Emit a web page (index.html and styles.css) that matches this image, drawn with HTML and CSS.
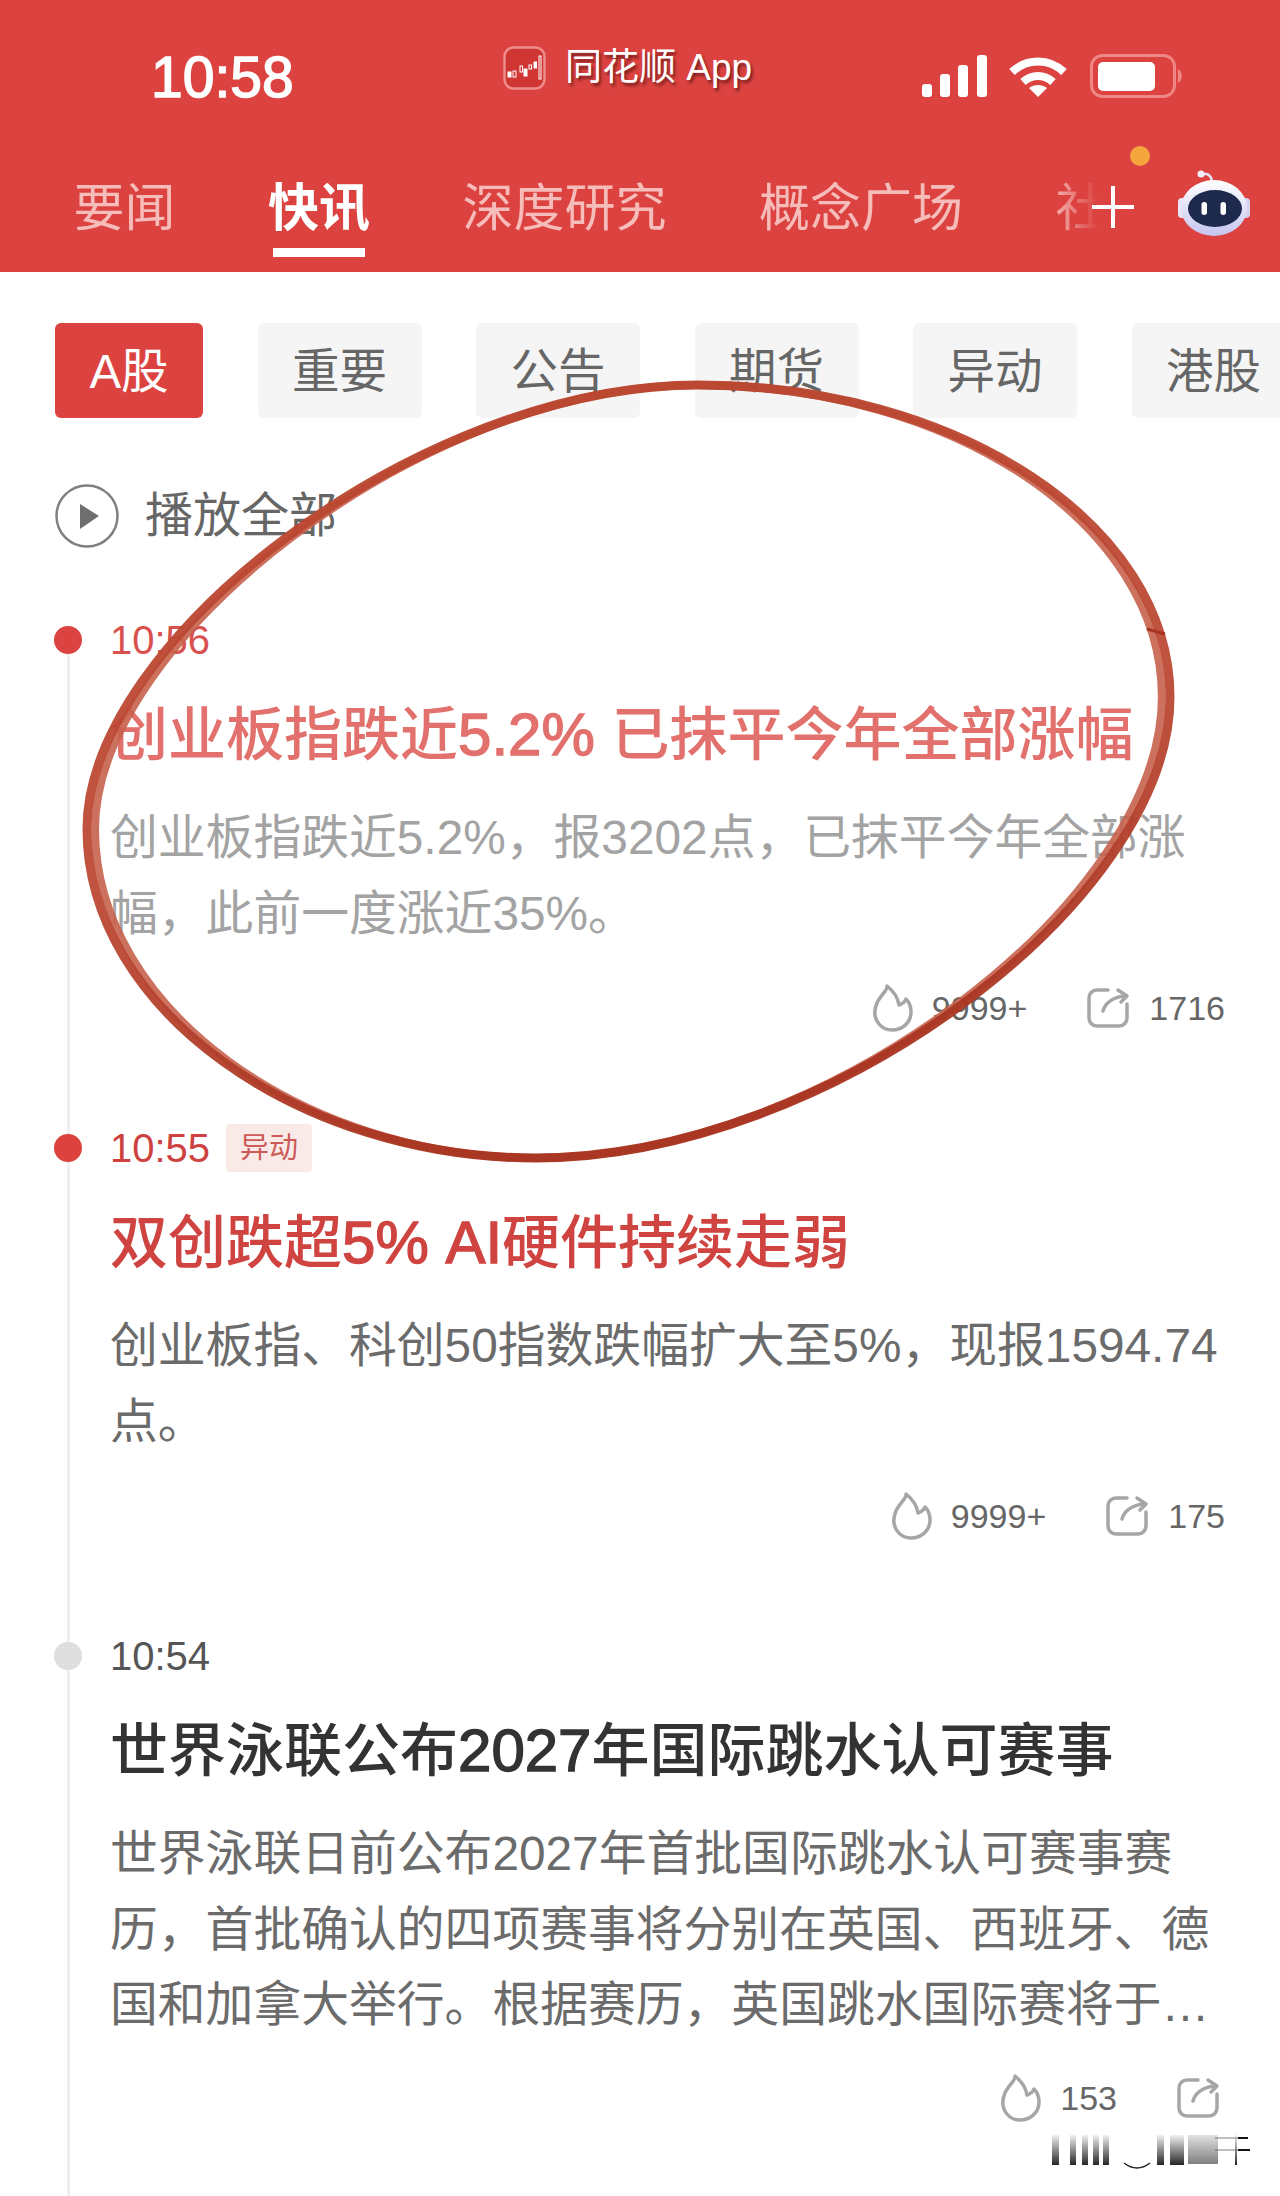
FILE: index.html
```html
<!DOCTYPE html>
<html lang="zh-CN">
<head>
<meta charset="utf-8">
<title>同花顺 快讯</title>
<link rel="stylesheet" href="styles.css">
</head>
<body>
<div class="page">
  <header class="header">
    <div class="status">
      <div class="clock">10:58</div>
      <div class="app-name">
        <svg class="app-icon" viewBox="0 0 43 44">
          <rect x="1.5" y="1.5" width="40" height="41" rx="9" fill="#cf3533" stroke="#ee8d8b" stroke-width="2.5"/>
          <g fill="#fff" stroke="#fff" stroke-width="1">
            <rect x="5" y="26" width="3" height="5"/>
            <rect x="10" y="25" width="3" height="6" fill="none"/>
            <rect x="17" y="20" width="2.5" height="6" fill="none"/>
            <rect x="21" y="23" width="3" height="7"/>
            <rect x="26" y="19" width="2.5" height="4" fill="none"/>
            <rect x="31" y="16" width="2.5" height="6"/>
            <rect x="36" y="10" width="2" height="23" fill="none"/>
          </g>
        </svg>
        <span class="app-label">同花顺 App</span>
      </div>
      <div class="sys">
        <svg class="signal" viewBox="0 0 65 42" fill="#fff">
          <rect x="0" y="29" width="10" height="13" rx="3"/>
          <rect x="18" y="19" width="10" height="23" rx="3"/>
          <rect x="36" y="10" width="10" height="32" rx="3"/>
          <rect x="55" y="0" width="10" height="42" rx="3"/>
        </svg>
        <svg class="wifi" viewBox="0 0 58 42" fill="none" stroke="#fff">
          <path d="M3 17 C18 3 40 3 55 17" stroke-width="8"/>
          <path d="M14 27 C23 19 35 19 44 27" stroke-width="8"/>
          <path d="M29 42 L20 33 C25 29 33 29 38 33 Z" fill="#fff" stroke="none"/>
        </svg>
        <svg class="battery" viewBox="0 0 94 44" fill="none">
          <rect x="1.5" y="1.5" width="83" height="41" rx="11" stroke="#ee8785" stroke-width="3"/>
          <rect x="8" y="8" width="57" height="29" rx="5" fill="#fff"/>
          <path d="M88 15 C93 18 93 26 88 29 Z" fill="#ee8785"/>
        </svg>
      </div>
    </div>
    <nav class="tabs">
      <a class="tab">要闻</a>
      <a class="tab tab-active">快讯</a>
      <a class="tab">深度研究</a>
      <a class="tab">概念广场</a>
      <a class="tab">社区</a>
    </nav>
    <div class="tools">
      <span class="plus"></span>
      <span class="notify"></span>
      <svg class="robot" viewBox="0 0 72 68">
        <defs>
          <linearGradient id="robotHead" x1="0" y1="0" x2="0" y2="1">
            <stop offset="0" stop-color="#ffffff"/>
            <stop offset="1" stop-color="#c5c5f0"/>
          </linearGradient>
        </defs>
        <path d="M24 5 C30 2 33 6 34 11" fill="none" stroke="#e6e3f5" stroke-width="2.5"/>
        <circle cx="23" cy="4" r="3.5" fill="#f1eff9"/>
        <rect x="0" y="28" width="8" height="20" rx="4" fill="#e8e6f7"/>
        <rect x="64" y="28" width="8" height="20" rx="4" fill="#d6d3ef"/>
        <ellipse cx="36" cy="38" rx="33" ry="28" fill="url(#robotHead)"/>
        <ellipse cx="37" cy="38.5" rx="27" ry="18.5" fill="#1d2a4e"/>
        <rect x="23.5" y="32" width="5.5" height="13" rx="2.7" fill="#fff"/>
        <rect x="42.5" y="32" width="5.5" height="13" rx="2.7" fill="#fff"/>
      </svg>
    </div>
  </header>

  <div class="chips">
    <a class="chip chip-active">A股</a>
    <a class="chip">重要</a>
    <a class="chip">公告</a>
    <a class="chip">期货</a>
    <a class="chip">异动</a>
    <a class="chip">港股</a>
  </div>

  <div class="play-all">
    <svg class="play-icon" viewBox="0 0 64 64">
      <circle cx="32" cy="32" r="30.5" fill="none" stroke="#808080" stroke-width="2.5"/>
      <path d="M25 20 L44 32 L25 45 Z" fill="#6f6f6f"/>
    </svg>
    <span class="play-label">播放全部</span>
  </div>

  <section class="feed">
    <article class="item item-read">
      <div class="rail"><span class="dot dot-red"></span><span class="line"></span></div>
      <div class="content">
        <div class="meta"><time class="time time-red">10:56</time></div>
        <h2 class="title">创业板指跌近<span class="latin">5.2% </span>已抹平今年全部涨幅</h2>
        <p class="body">创业板指跌近5.2%，报3202点，已抹平今年全部涨幅，此前一度涨近35%。</p>
        <div class="stats">
          <span class="stat">
            <svg class="fire" viewBox="0 0 40 48"><path d="M14 2 C15 6 7 12 4 19 C1 26 1 34 6 40 C10 45 15 46 19 46 C29 46 38 39 38 28 C38 23 36 18 33 15 C32 18 29 20 26 21 C25 13 19 6 14 2 Z"/></svg>
            <span class="count">9999+</span>
          </span>
          <span class="stat">
            <svg class="share" viewBox="0 0 44 42"><path d="M22 3 H11 A8 8 0 0 0 3 11 V31 A8 8 0 0 0 11 39 H33 A8 8 0 0 0 41 31 V17"/><path d="M17 24 C19 16 27 10 39 9"/><path d="M32 3 L41 9 L35 15"/></svg>
            <span class="count">1716</span>
          </span>
        </div>
      </div>
    </article>

    <article class="item item-hot">
      <div class="rail"><span class="dot dot-red"></span><span class="line"></span></div>
      <div class="content">
        <div class="meta"><time class="time time-red">10:55</time><span class="badge">异动</span></div>
        <h2 class="title">双创跌超<span class="latin">5% AI</span>硬件持续走弱</h2>
        <p class="body">创业板指、科创50指数跌幅扩大至5%，现报1594.74点。</p>
        <div class="stats">
          <span class="stat">
            <svg class="fire" viewBox="0 0 40 48"><path d="M14 2 C15 6 7 12 4 19 C1 26 1 34 6 40 C10 45 15 46 19 46 C29 46 38 39 38 28 C38 23 36 18 33 15 C32 18 29 20 26 21 C25 13 19 6 14 2 Z"/></svg>
            <span class="count">9999+</span>
          </span>
          <span class="stat">
            <svg class="share" viewBox="0 0 44 42"><path d="M22 3 H11 A8 8 0 0 0 3 11 V31 A8 8 0 0 0 11 39 H33 A8 8 0 0 0 41 31 V17"/><path d="M17 24 C19 16 27 10 39 9"/><path d="M32 3 L41 9 L35 15"/></svg>
            <span class="count">175</span>
          </span>
        </div>
      </div>
    </article>

    <article class="item">
      <div class="rail"><span class="dot"></span><span class="line"></span></div>
      <div class="content">
        <div class="meta"><time class="time">10:54</time></div>
        <h2 class="title">世界泳联公布<span class="latin">2027</span>年国际跳水认可赛事</h2>
        <p class="body body-clamp">世界泳联日前公布2027年首批国际跳水认可赛事赛历，首批确认的四项赛事将分别在英国、西班牙、德国和加拿大举行。根据赛历，英国跳水国际赛将于3月在伦敦举行。</p>
        <div class="stats stats-last">
          <span class="stat">
            <svg class="fire" viewBox="0 0 40 48"><path d="M14 2 C15 6 7 12 4 19 C1 26 1 34 6 40 C10 45 15 46 19 46 C29 46 38 39 38 28 C38 23 36 18 33 15 C32 18 29 20 26 21 C25 13 19 6 14 2 Z"/></svg>
            <span class="count">153</span>
          </span>
          <span class="stat">
            <svg class="share" viewBox="0 0 44 42"><path d="M22 3 H11 A8 8 0 0 0 3 11 V31 A8 8 0 0 0 11 39 H33 A8 8 0 0 0 41 31 V17"/><path d="M17 24 C19 16 27 10 39 9"/><path d="M32 3 L41 9 L35 15"/></svg>
          </span>
        </div>
      </div>
    </article>
  </section>

  <svg class="annotation" viewBox="0 0 1280 2196">
    <defs>
      <linearGradient id="inkStroke" x1="0" y1="0" x2="0.3" y2="1">
        <stop offset="0" stop-color="#b9442c"/>
        <stop offset="0.6" stop-color="#bd4a36"/>
        <stop offset="1" stop-color="#a83420"/>
      </linearGradient>
      <path id="inkLoop" d="M698 385 C958 385 1170 525 1170 697 C1170 900 830 1158 535 1158 C300 1158 87 1010 87 829 C87 640 420 385 698 385 Z"/>
    </defs>
    <use href="#inkLoop" class="ink-halo" transform="translate(626 772) scale(.985 1) translate(-626 -772)"/>
    <use href="#inkLoop" class="ink-core"/>
    <path class="ink-tick" d="M1147 629 L1165 634"/>
  </svg>

  <svg class="watermark" viewBox="0 0 210 44">
    <defs>
      <linearGradient id="markFade" x1="0" y1="0" x2="0" y2="1">
        <stop offset="0" stop-color="#000" stop-opacity="0.05"/>
        <stop offset="1" stop-color="#000" stop-opacity="0.85"/>
      </linearGradient>
      <linearGradient id="markBlock" x1="0" y1="0" x2="0" y2="1">
        <stop offset="0" stop-color="#000" stop-opacity="0.12"/>
        <stop offset="1" stop-color="#000" stop-opacity="0.5"/>
      </linearGradient>
    </defs>
    <g fill="url(#markFade)">
      <rect x="2" y="4" width="7" height="30"/>
      <rect x="20" y="4" width="6" height="30"/>
      <rect x="32" y="4" width="6" height="30"/>
      <rect x="43" y="4" width="6" height="30"/>
      <rect x="53" y="4" width="6" height="30"/>
      <rect x="107" y="4" width="7" height="30"/>
      <rect x="120" y="4" width="9" height="30"/>
      <rect x="129" y="4" width="5" height="30"/>
      <rect x="185" y="4" width="2" height="30"/>
    </g>
    <rect x="138" y="4" width="30" height="29" fill="url(#markBlock)"/>
    <path d="M74 32 Q87 42 100 32" fill="none" stroke="#222" stroke-width="1.5"/>
    <path d="M165 7 H198 M165 19 H200" stroke="#555" stroke-width="1.5" stroke-opacity="0.5" fill="none"/>
    <path d="M188 7 H198 M188 19 H200" stroke="#111" stroke-width="2" fill="none"/>
  </svg>
</div>
</body>
</html>
```

FILE: styles.css
```css
* { box-sizing: border-box; }

html, body { margin: 0; padding: 0; background: #fff; }

body {
  font-family: "Liberation Sans", "Noto Sans CJK SC", sans-serif;
}

.page {
  position: relative;
  width: 1280px;
  height: 2196px;
  overflow: hidden;
  background: #fff;
}

/* header */
.header {
  position: relative;
  height: 272px;
  background: #dc4340;
  overflow: hidden;
}

.status {
  display: grid;
  grid-template-columns: 503px 419px 1fr;
  height: 154px;
  align-items: center;
}

.clock {
  padding-left: 151px;
  color: #fff;
  font-size: 57px;
  font-weight: 400;
  -webkit-text-stroke: 1.5px #fff;
  line-height: 1;
}

.app-name {
  display: flex;
  align-items: center;
  gap: 19px;
  padding-bottom: 18px;
}

.app-icon { width: 43px; height: 44px; }

.app-label {
  color: #fff;
  font-size: 37px;
  line-height: 44px;
  text-shadow: 2px 3px 3px rgba(90, 20, 20, .75);
}

.sys {
  display: flex;
  align-items: center;
  padding-bottom: 3px;
}

.signal { width: 65px; height: 42px; margin-right: 22px; }
.wifi { width: 58px; height: 42px; margin-right: 23px; }
.battery { width: 94px; height: 44px; }

.tabs {
  display: flex;
  gap: 92.5px;
  padding: 30px 0 0 73.5px;
}

.tab {
  position: relative;
  flex-shrink: 0;
  color: #f5bcba;
  font-size: 51px;
  line-height: 50px;
}

.tab-active {
  color: #fff;
  font-weight: 700;
}

.tab-active::after {
  content: "";
  position: absolute;
  left: 5px;
  right: 5px;
  top: 64px;
  height: 9px;
  background: #fff;
}

.tools {
  position: absolute;
  top: 150px;
  right: 0;
  bottom: 0;
  width: 230px;
  background: linear-gradient(90deg, rgba(220, 67, 64, 0) 0, #dc4340 48px);
}

.plus {
  position: absolute;
  left: 42px;
  top: 36px;
  width: 42px;
  height: 42px;
  background:
    linear-gradient(#fff, #fff) center / 42px 4px no-repeat,
    linear-gradient(#fff, #fff) center / 4px 42px no-repeat;
}

.notify {
  position: absolute;
  left: 80px;
  top: -4px;
  width: 20px;
  height: 20px;
  border-radius: 50%;
  background: #f4a63c;
}

.robot {
  position: absolute;
  left: 128px;
  top: 20px;
  width: 72px;
  height: 68px;
}

/* chips */
.chips {
  display: flex;
  gap: 54.5px;
  padding: 51px 0 0 55px;
  overflow: hidden;
}

.chip {
  flex: 0 0 164px;
  height: 95px;
  padding-top: 1px;
  border-radius: 6px;
  background: #f5f5f5;
  color: #666;
  font-size: 47.5px;
  line-height: 95px;
  text-align: center;
}

.chip-active {
  flex-basis: 148px;
  background: #dc4340;
  color: #fff;
}

/* play all */
.play-all {
  display: flex;
  align-items: center;
  gap: 26px;
  height: 64px;
  margin: 66px 0 78px 55px;
}

.play-icon { width: 64px; height: 64px; }

.play-label {
  color: #666;
  font-size: 48px;
  line-height: 64px;
}

/* feed */
.item {
  display: flex;
  padding-left: 54px;
}

.rail {
  flex: 0 0 56px;
  display: flex;
  flex-direction: column;
  align-items: flex-start;
}

.dot {
  flex: 0 0 28px;
  width: 28px;
  border-radius: 50%;
  background: #dedede;
}

.dot-red { background: #dc4340; }

.line {
  flex: 1;
  width: 3px;
  margin-left: 13px;
  background: #eeeeee;
}

.content {
  width: 1115px;
  padding-bottom: 102px;
}

.meta {
  display: flex;
  align-items: center;
  gap: 16px;
  height: 28px;
}

.time {
  color: #555;
  font-size: 40px;
  line-height: 28px;
}

.time-red { color: #cd4240; }

.badge {
  margin: -10px 0;
  padding: 0 14px;
  height: 48px;
  border-radius: 4px;
  background: #f9e9e7;
  color: #cc5a56;
  font-size: 29px;
  line-height: 48px;
}

.title {
  height: 80px;
  margin: 41px 0 25px;
  color: #333;
  font-size: 58px;
  font-weight: 500;
  line-height: 80px;
  white-space: nowrap;
}

.latin {
  font-size: 60px;
  font-weight: 400;
  line-height: 60px;
  -webkit-text-stroke: 1.4px currentColor;
}

.body {
  margin: 0;
  color: #6b6b6b;
  font-size: 47.8px;
  line-height: 75.5px;
}

.body-clamp {
  display: -webkit-box;
  -webkit-box-orient: vertical;
  -webkit-line-clamp: 3;
  overflow: hidden;
}

.item-hot .title { color: #cf4440; }

.item-read .title { color: #e2706c; }
.item-read .body { color: #a3a3a3; }
.item-read .time { color: #d9514e; }

.stats {
  display: flex;
  justify-content: flex-end;
  gap: 59px;
  height: 48px;
  margin-top: 33px;
}

.stats-last {
  margin-top: 31px;
  padding-right: 5px;
}

.stat {
  display: flex;
  align-items: center;
  gap: 19px;
}

.count {
  color: #666;
  font-size: 34px;
  line-height: 48px;
}

.fire, .share {
  fill: none;
  stroke: #a6a6a6;
  stroke-width: 3.5;
  stroke-linecap: round;
  stroke-linejoin: round;
}

.fire { width: 40px; height: 48px; }
.share { width: 44px; height: 42px; }

/* overlays */
.annotation {
  position: absolute;
  left: 0;
  top: 0;
  width: 1280px;
  height: 2196px;
  pointer-events: none;
}

.ink-halo {
  fill: none;
  stroke: #c8624e;
  stroke-width: 8;
  stroke-opacity: .9;
}

.ink-core {
  fill: none;
  stroke: url(#inkStroke);
  stroke-width: 9;
  stroke-opacity: .95;
}

.ink-tick {
  fill: none;
  stroke: #a83420;
  stroke-width: 3;
}

.watermark {
  position: absolute;
  left: 1050px;
  top: 2131px;
  width: 210px;
  height: 44px;
}
```
